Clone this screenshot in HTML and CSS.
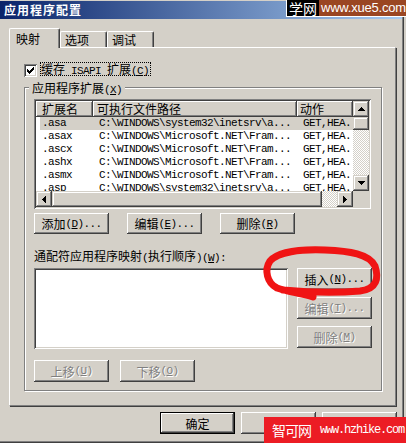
FILE: index.html
```html
<!DOCTYPE html>
<html lang="zh-CN">
<head>
<meta charset="utf-8">
<title>应用程序配置</title>
<link rel="stylesheet" href="styles.css">
</head>
<body>
<div class="win">
  <div class="titlebar">应用程序配置</div>
  <div class="content">
    <div class="tabs">
      <div class="tab sel">映射</div>
      <div class="tab">选项</div>
      <div class="tab">调试</div>
    </div>
    <div class="panel">
      <div class="chk-row">
        <span class="chk"><svg width="7" height="7" viewBox="0 0 7 7" shape-rendering="crispEdges"><path fill="#000" d="M6 0h1v1H6zM5 1h2v1H5zM0 2h1v1H0zM4 2h3v1H4zM0 3h2v1H0zM3 3h3v1H3zM0 4h5v1H0zM1 5h3v1H1zM2 6h1v1H2z"/></svg></span>
        <span class="chk-label">缓存<span class="a"> ISAPI </span>扩展<span class="a">(<u>C</u>)</span></span>
      </div>
      <div class="group">
        <div class="gtitle">应用程序扩展<span class="a">(<u>X</u>)</span></div>
        <div class="lv">
          <div class="lv-main">
            <div class="lv-head">
              <div class="hc c1">扩展名</div>
              <div class="hc c2">可执行文件路径</div>
              <div class="hc c3">动作</div>
            </div>
            <div class="lv-rows a">
              <div class="row sel"><span class="c1">.asa</span><span class="c2">C:\WINDOWS\system32\inetsrv\a...</span><span class="c3">GET,HEA.</span></div>
              <div class="row"><span class="c1">.asax</span><span class="c2">C:\WINDOWS\Microsoft.NET\Fram...</span><span class="c3">GET,HEA.</span></div>
              <div class="row"><span class="c1">.ascx</span><span class="c2">C:\WINDOWS\Microsoft.NET\Fram...</span><span class="c3">GET,HEA.</span></div>
              <div class="row"><span class="c1">.ashx</span><span class="c2">C:\WINDOWS\Microsoft.NET\Fram...</span><span class="c3">GET,HEA.</span></div>
              <div class="row"><span class="c1">.asmx</span><span class="c2">C:\WINDOWS\Microsoft.NET\Fram...</span><span class="c3">GET,HEA.</span></div>
              <div class="row"><span class="c1">.asp</span><span class="c2">C:\WINDOWS\system32\inetsrv\a...</span><span class="c3">GET,HEA.</span></div>
            </div>
          </div>
          <div class="vscroll">
            <div class="sbtn"><svg width="7" height="4" viewBox="0 0 7 4" shape-rendering="crispEdges"><path d="M3 0h1v1h1v1h1v1h1v1H0V3h1V2h1V1h1z"/></svg></div>
            <div class="thumb v"></div>
            <div class="track"></div>
            <div class="sbtn"><svg width="7" height="4" viewBox="0 0 7 4" shape-rendering="crispEdges"><path d="M0 0h7v1h-1v1h-1v1h-1v1h-1v-1h-1v-1h-1v-1h-1z"/></svg></div>
          </div>
          <div class="hscroll">
            <div class="sbtn"><svg width="4" height="7" viewBox="0 0 4 7" shape-rendering="crispEdges"><path d="M4 0v7h-1v-1h-1v-1h-1v-1h-1v-1h1v-1h1v-1h1v-1z"/></svg></div>
            <div class="thumb h"></div>
            <div class="track"></div>
            <div class="sbtn"><svg width="4" height="7" viewBox="0 0 4 7" shape-rendering="crispEdges"><path d="M0 0v7h1v-1h1v-1h1v-1h1v-1h-1v-1h-1v-1h-1v-1z"/></svg></div>
          </div>
          <div class="corner"></div>
        </div>
        <div class="btnrow">
          <button type="button" class="btn">添加<span class="a">(<u>D</u>)...</span></button>
          <button type="button" class="btn">编辑<span class="a">(<u>E</u>)...</span></button>
          <button type="button" class="btn">删除<span class="a">(<u>R</u>)</span></button>
        </div>
        <div class="lbl">通配符应用程序映射<span class="a">(</span>执行顺序<span class="a">)(<u>W</u>):</span></div>
        <div class="wild">
          <div class="listbox"></div>
          <div class="btncol">
            <button type="button" class="btn">插入<span class="a">(<u>N</u>)...</span></button>
            <button type="button" class="btn dis">编辑<span class="a">(<u>T</u>)...</span></button>
            <button type="button" class="btn dis">删除<span class="a">(<u>M</u>)</span></button>
          </div>
        </div>
        <div class="btnrow2">
          <button type="button" class="btn dis">上移<span class="a">(<u>U</u>)</span></button>
          <button type="button" class="btn dis">下移<span class="a">(<u>O</u>)</span></button>
        </div>
      </div>
    </div>
    <div class="dlg">
      <button type="button" class="btn def">确定</button>
      <button type="button" class="btn">取消</button>
      <button type="button" class="btn">帮助</button>
    </div>
  </div>
</div>
<svg class="scribble" width="406" height="443" viewBox="0 0 406 443"><path d="M313 297 C302 293 288 292 277 288 C267 283 264 270 270 261 C278 252 300 249 325 250 C350 251 369 254 375 266 C379 278 377 289 360 291 C335 293 305 292 283 290" fill="none" stroke="#f01414" stroke-width="7" stroke-linecap="round" stroke-linejoin="round"/></svg>
<div class="wm-top"><span class="wm-k">学网</span><span class="wm-b">www.xue5.com</span></div>
<div class="wm-bot"><span class="wm-cn">智可网</span><span class="wm-url">www.hzhike.com</span></div>
</body>
</html>
```
FILE: styles.css
```css
* { box-sizing: border-box; }
html, body { margin: 0; padding: 0; }
body {
  width: 406px; height: 443px; overflow: hidden; position: relative;
  background: #d4d0c8; color: #000;
  font-family: "Noto Sans CJK SC", sans-serif; font-size: 12px;
}
.a { font-family: "Liberation Mono", monospace; font-size: 11px; letter-spacing: -0.6px; }
u { text-decoration: underline; text-underline-offset: 1px; }

.win {
  width: 404px; height: 443px; padding-top: 1px;
  border-right: 1px solid #404040; border-bottom: 1px solid #404040;
  box-shadow: inset -1px -1px #808080;
}
.titlebar {
  height: 18px; margin-right: 1px; padding-left: 4px;
  background: linear-gradient(to right, #0a246a, #a6caf0);
  color: #fff; font-weight: bold; line-height: 18px; letter-spacing: 1px;
}
.content { padding-left: 9px; }

.tabs { display: flex; align-items: flex-end; height: 19px; margin-top: 9px; }
.tab {
  height: 16px; padding: 0 17px 0 4px; line-height: 15px;
  border-top: 1px solid #fff; border-left: 1px solid #fff; border-right: 1px solid #404040;
  box-shadow: inset -1px 0 #808080; border-radius: 2px 2px 0 0; white-space: nowrap;
}
.tab.sel {
  height: 20px; margin-bottom: -1px; padding: 1px 19px 0 6px; line-height: 18px;
  position: relative; z-index: 1; background: #d4d0c8;
}

.panel {
  width: 387px; height: 359px; padding-top: 14px;
  border: 1px solid; border-color: #fff #808080 #808080 #fff;
  box-shadow: 1px 1px 0 #404040;
}
.chk-row { display: flex; align-items: flex-start; height: 14px; margin-left: 14px; }
.chk {
  width: 13px; height: 13px; margin-top: 2px; padding: 3px; background: #fff; display: flex;
  box-shadow: inset 1px 1px #808080, inset -1px -1px #fff, inset 2px 2px #404040, inset -2px -2px #d4d0c8;
}
.chk-label { margin-left: 3px; height: 14px; line-height: 12px; padding-right: 1px; border: 1px dotted #000; white-space: nowrap; }

.group {
  margin: 11px 0 0 14px; width: 358px; height: 304px; padding-left: 9px;
  border: 1px solid #808080; box-shadow: inset 1px 1px #fff, 1px 1px 0 #fff;
}
.gtitle { width: fit-content; height: 14px; margin: -7px 0 0 -5px; padding: 0 3px; line-height: 14px; background: #d4d0c8; white-space: nowrap; }

.lv, .listbox {
  background: #fff; padding: 2px;
  box-shadow: inset 1px 1px #808080, inset -1px -1px #fff, inset 2px 2px #404040, inset -2px -2px #d4d0c8;
}
.lv {
  margin-top: 4px; width: 337px; height: 110px;
  display: grid; grid-template-columns: 1fr 16px; grid-template-rows: 1fr 16px;
}
.lv-main { overflow: hidden; }
.lv-head { display: flex; height: 16px; }
.hc {
  height: 16px; line-height: 16px; background: #d4d0c8; white-space: nowrap; overflow: hidden;
  box-shadow: inset -1px -1px #404040, inset 1px 1px #fff, inset -2px -2px #808080;
}
.hc.c1 { width: 57px; padding-left: 6px; }
.hc.c2 { width: 204px; padding-left: 4px; }
.hc.c3 { flex: 1; padding-left: 3px; }
.row { display: flex; height: 13px; margin-left: 4px; line-height: 13px; white-space: nowrap; }
.row.sel { background: #d4d0c8; }
.row .c1 { width: 53px; padding-left: 2px; }
.row .c2 { width: 204px; padding-left: 6px; }
.row .c3 { flex: 1; padding-left: 6px; overflow: hidden; }

.vscroll { display: flex; flex-direction: column; }
.hscroll { display: flex; }
.sbtn {
  flex: none; width: 16px; height: 16px; background: #d4d0c8;
  display: flex; align-items: center; justify-content: center;
  box-shadow: inset -1px -1px #404040, inset 1px 1px #d4d0c8, inset -2px -2px #808080, inset 2px 2px #fff;
}
.thumb {
  flex: none; background: #d4d0c8;
  box-shadow: inset -1px -1px #404040, inset 1px 1px #d4d0c8, inset -2px -2px #808080, inset 2px 2px #fff;
}
.thumb.v { height: 13px; }
.thumb.h { width: 270px; }
.track { flex: 1; background: repeating-conic-gradient(#d4d0c8 0 25%, #fff 0 50%) 0 0 / 2px 2px; }
.corner { background: #d4d0c8; }

.btn {
  width: 75px; height: 21px; padding: 0; margin: 0; border: 0;
  font: inherit; color: #000; background: #d4d0c8; white-space: nowrap;
  display: flex; align-items: center; justify-content: center;
  box-shadow: inset -1px -1px #404040, inset 1px 1px #fff, inset -2px -2px #808080;
}
.btn.def { box-shadow: inset 0 0 0 1px #000, inset -2px -2px #404040, inset 2px 2px #fff, inset -3px -3px #808080; }
.btn.dis { color: #808080; text-shadow: 1px 1px 0 #fff; }

.btnrow { display: flex; gap: 18px; margin-top: 4px; }
.lbl { margin-top: 16px; height: 12px; line-height: 12px; white-space: nowrap; }
.wild { display: flex; margin-top: 6px; }
.listbox { width: 254px; height: 81px; }
.btncol { display: flex; flex-direction: column; gap: 7px; margin-left: 9px; }
.btncol .btn { height: 22px; }
.btnrow2 { display: flex; gap: 11px; margin-top: 11px; }
.btnrow2 .btn { height: 22px; }

.dlg { display: flex; justify-content: flex-end; gap: 6px; width: 388px; margin-top: 6px; }
.dlg .btn { height: 22px; }

.scribble { position: absolute; left: 0; top: 0; pointer-events: none; }

.wm-top {
  position: absolute; top: 0; left: 286px; width: 120px; height: 17px; display: flex;
  border-left: 1px solid #fff; border-bottom: 1px solid #fff;
}
.wm-k { width: 33px; background: #000; color: #fff; font-size: 14px; line-height: 16px; text-align: center; }
.wm-b { flex: 1; background: #9a4622; color: #fff; font-family: "Liberation Sans", sans-serif; font-size: 13px; line-height: 16px; padding-left: 2px; letter-spacing: -0.2px; }

.wm-bot {
  position: absolute; left: 264px; top: 417px; width: 142px; height: 26px;
  background: #ec1c24; color: #fff; display: flex; align-items: center;
}
.wm-cn { font-size: 14px; letter-spacing: -1px; margin-left: 8px; }
.wm-url { font-family: "Liberation Mono", monospace; font-size: 12px; letter-spacing: -1.2px; margin-left: 9px; }
```
